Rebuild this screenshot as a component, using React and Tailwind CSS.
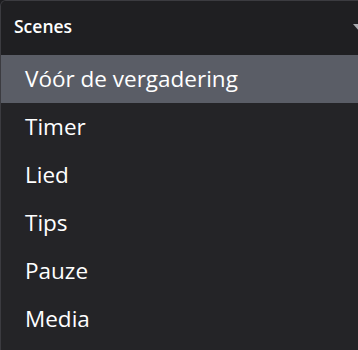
import React from "react";

const scenes = ["Vóór de vergadering", "Timer", "Lied", "Tips", "Pauze", "Media"];

export default function App() {
  return (
    <div className="w-[358px] h-[350px] bg-[#1c1c1f] overflow-hidden" style={{ fontFamily: '"Open Sans", "Noto Sans", sans-serif' }}>
      <div className="h-[360px] rounded-tl-[6px] border-t border-l border-[#3b3b40] bg-[#242427] overflow-hidden">
        {/* Header */}
        <div className="h-[54px] bg-[#1f1f22] flex items-center justify-between pl-[13px]">
          <span className="text-white text-[17.5px] font-semibold leading-none -mt-[2px]">Scenes</span>
          <span className="w-0 h-0 border-l-[6px] border-r-[6px] border-t-[7px] border-l-transparent border-r-transparent border-t-[#a9abb0] mr-[-7px] -mt-[2px]" />
        </div>
        {/* Scene list */}
        <ul>
          {scenes.map((s, i) => (
            <li
              key={s}
              className={`h-[48px] flex items-center pl-[24px] text-white text-[22.5px] ${i === 0 ? "bg-[#5a5d66]" : ""}`}
            >
              {s}
            </li>
          ))}
        </ul>
      </div>
    </div>
  );
}
